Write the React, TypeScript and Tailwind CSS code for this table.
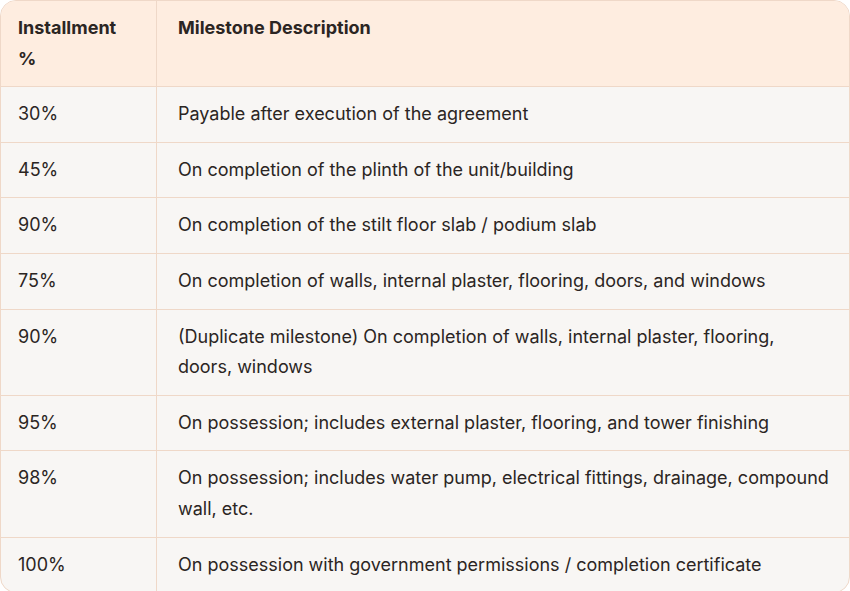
const rows: [string, string][] = [
  ["30%", "Payable after execution of the agreement"],
  ["45%", "On completion of the plinth of the unit/building"],
  ["90%", "On completion of the stilt floor slab / podium slab"],
  ["75%", "On completion of walls, internal plaster, flooring, doors, and windows"],
  ["90%", "(Duplicate milestone) On completion of walls, internal plaster, flooring, doors, windows"],
  ["95%", "On possession; includes external plaster, flooring, and tower finishing"],
  ["98%", "On possession; includes water pump, electrical fittings, drainage, compound wall, etc."],
  ["100%", "On possession with government permissions / completion certificate"],
];

export default function App() {
  return (
    <div className="w-[850px] bg-white" style={{ fontFamily: "Inter, 'Noto Sans', sans-serif" }}>
      <div className="overflow-hidden rounded-2xl border border-[#efd8c8] bg-[#f8f6f4] text-[18px] leading-[30.6px] text-[#2b2523]">
        <div className="flex border-b border-[#efd8c8] bg-[#feede0] font-bold">
          <div className="w-[156px] shrink-0 border-r border-[#efd8c8] px-[17px] py-3">
            Installment
            <br />%
          </div>
          <div className="flex-1 pl-[21px] pr-[19px] py-3">Milestone Description</div>
        </div>
        {rows.map(([pct, desc], i) => (
          <div key={i} className={"flex " + (i < rows.length - 1 ? "border-b border-[#efd8c8]" : "")}>
            <div className="w-[156px] shrink-0 border-r border-[#efd8c8] px-[17px] py-3">{pct}</div>
            <div className="flex-1 pl-[21px] pr-[19px] py-3">{desc}</div>
          </div>
        ))}
      </div>
    </div>
  );
}
